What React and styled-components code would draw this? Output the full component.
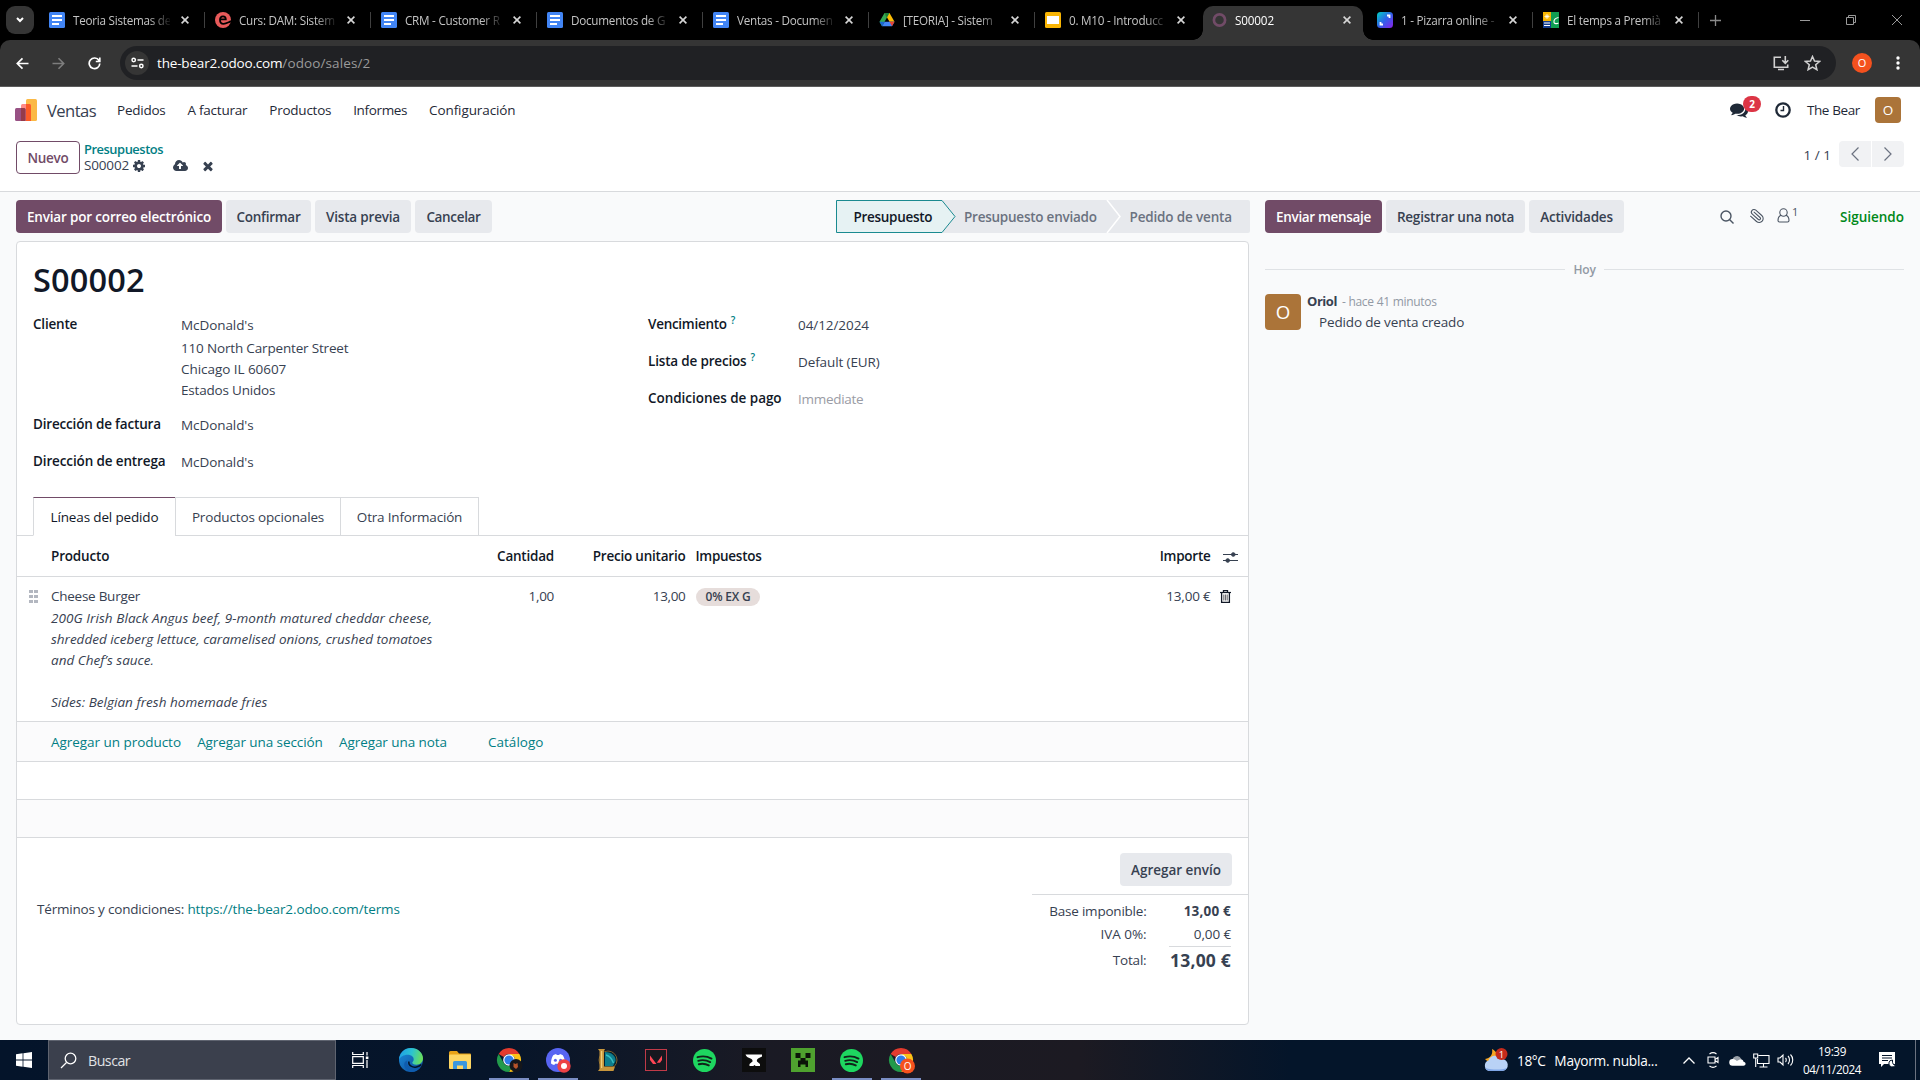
import React from "react";
import styled, { createGlobalStyle, css } from "styled-components";
import { Paperclip } from "lucide-react";

const GlobalStyle = createGlobalStyle`
  *, *::before, *::after { box-sizing: border-box; }
  body {
    margin: 0;
    overflow: hidden;
    font-family: "Open Sans", "Noto Sans", sans-serif;
    font-size: 13.5px;
    line-height: 21px;
    letter-spacing: -0.17px;
    color: #374151;
    background: #fff;
  }
  svg { display: block; flex: none; }
`;

const spacing = css`
  letter-spacing: ${(p) => (p.$ls === undefined ? "inherit" : `${p.$ls}px`)};
`;

const Text = styled.span`
  ${spacing}
  white-space: nowrap;
`;

const Screen = styled.div`
  width: 1920px;
  height: 1080px;
  display: flex;
  flex-direction: column;
  overflow: hidden;
`;

/* ---------- Browser chrome ---------- */

const TabStrip = styled.div`
  height: 40px;
  background: #000;
  display: flex;
  align-items: center;
  padding-left: 6px;
  flex: none;
`;

const TabSearch = styled.div`
  width: 28px;
  height: 28px;
  margin-right: 5px;
  border-radius: 9px;
  background: #353535;
  display: grid;
  place-items: center;
`;

const BrowserTab = styled.div`
  position: relative;
  width: 166px;
  height: 40px;
  display: flex;
  align-items: center;
  padding: 0 12px 0 10px;
  color: ${(p) => (p.$active ? "#fff" : "#c4c4c4")};
  &::after {
    content: "";
    position: absolute;
    right: 0;
    top: 12px;
    width: 1.5px;
    height: 16px;
    background: ${(p) => (p.$sep ? "#404040" : "transparent")};
  }
`;

const ActiveShape = styled.div`
  position: absolute;
  left: 2px;
  right: 4px;
  top: 6px;
  bottom: 0;
  border-radius: 10px 10px 0 0;
  background: #353535;
  &::before,
  &::after {
    content: "";
    position: absolute;
    bottom: 0;
    width: 10px;
    height: 10px;
  }
  &::before {
    left: -10px;
    background: radial-gradient(circle at 0 0, transparent 9.5px, #353535 10px);
  }
  &::after {
    right: -10px;
    background: radial-gradient(circle at 100% 0, transparent 9.5px, #353535 10px);
  }
`;

const Favicon = styled.div`
  position: relative;
  width: 16px;
  height: 16px;
  margin-right: 8px;
`;

const TabTitle = styled.div`
  position: relative;
  width: 98px;
  overflow: hidden;
  white-space: nowrap;
  font-size: 11.7px;
  letter-spacing: ${(p) => p.$ls ?? -0.25}px;
  mask-image: linear-gradient(to right, #000 76px, ${(p) => (p.$fade ? "rgba(0,0,0,.1)" : "#000")} 97px);
`;

const TabClose = styled.div`
  position: relative;
  width: 16px;
  height: 16px;
  margin-left: 7px;
  display: grid;
  place-items: center;
`;

const NewTab = styled.div`
  width: 32px;
  display: grid;
  place-items: center;
`;

const WindowControls = styled.div`
  margin-left: auto;
  display: flex;
  > div {
    width: 46px;
    display: grid;
    place-items: center;
  }
`;

const ToolbarBack = styled.div`
  background: #000;
  flex: none;
`;

const Toolbar = styled.div`
  height: 47px;
  background: #353535;
  border-radius: 10px 10px 0 0;
  border-bottom: 1px solid #5c5c5c;
  display: flex;
  align-items: center;
  padding: 0 4px 0 4px;
`;

const ToolButton = styled.div`
  width: 36px;
  height: 34px;
  display: grid;
  place-items: center;
`;

const Omnibox = styled.div`
  margin-left: 8px;
  width: 1716px;
  height: 34px;
  border-radius: 17px;
  background: #202124;
  display: flex;
  align-items: center;
  padding: 0 15px 0 5px;
  font-size: 13.5px;
`;

const SiteInfo = styled.div`
  width: 24px;
  height: 24px;
  border-radius: 50%;
  background: #353535;
  display: grid;
  place-items: center;
  margin-right: 8px;
`;

const Host = styled.span`
  color: #fff;
  font-weight: 500;
  letter-spacing: -0.17px;
`;

const Path = styled.span`
  color: #9a9a9a;
  letter-spacing: 0.11px;
`;

const OmniIcons = styled.div`
  margin: 0 0 0 auto;
  display: flex;
  gap: 14px;
`;

const Profile = styled.div`
  width: 20px;
  height: 20px;
  margin: 0 8px 0 16px;
  border-radius: 50%;
  background: #f4511e;
  color: #fff;
  font-size: 11px;
  line-height: 20px;
  text-align: center;
`;

/* ---------- Odoo ---------- */

const Navbar = styled.header`
  height: 46px;
  flex: none;
  display: flex;
  align-items: center;
  padding: 0 19px 0 15px;
  color: #1f2937;
`;

const AppName = styled.div`
  width: 55px;
  margin: 0 15px 0 10px;
  padding-top: 1px;
  font-size: 16.6px;
  letter-spacing: -0.55px;
  color: #374151;
`;

const MenuItems = styled.nav`
  display: flex;
  gap: 21.9px;
`;

const Systray = styled.div`
  margin-left: auto;
  display: flex;
  align-items: center;
`;

const Messages = styled.div`
  position: relative;
  width: 18px;
  margin-right: 27px;
`;

const Badge = styled.span`
  position: absolute;
  left: 13px;
  top: -5px;
  width: 18px;
  height: 16px;
  border-radius: 8px;
  background: #dc3545;
  color: #fff;
  font-size: 10px;
  font-weight: 700;
  line-height: 16px;
  text-align: center;
`;

const Company = styled.span`
  margin: 0 15px 0 16px;
  letter-spacing: -0.38px;
`;

const Avatar = styled.div`
  width: ${(p) => p.$size}px;
  height: ${(p) => p.$size}px;
  border-radius: 4px;
  background: #ab7439;
  color: #fff;
  font-size: ${(p) => p.$size * 0.52}px;
  line-height: ${(p) => p.$size}px;
  text-align: center;
  flex: none;
`;

const ControlPanel = styled.div`
  height: 59px;
  flex: none;
  border-bottom: 1px solid #d8dadd;
  display: flex;
  align-items: flex-start;
  padding: 8px 16px 0;
`;

const NewButton = styled.button`
  width: 64px;
  height: 33px;
  padding: 0;
  border: 1px solid #714b67;
  border-radius: 4px;
  background: #fff;
  color: #714b67;
  font: 580 13.5px "Open Sans", sans-serif;
  letter-spacing: -0.25px;
`;

const Breadcrumb = styled.div`
  margin: 0 0 0 4px;
  line-height: 17px;
`;

const CrumbLink = styled.div`
  color: #017e84;
  font-weight: 560;
  font-size: 12.9px;
  line-height: 16px;
  letter-spacing: -0.46px;
`;

const CrumbRow = styled.div`
  display: flex;
  align-items: center;
`;

const IconSlot = styled.div`
  margin-left: ${(p) => p.$gap}px;
  color: #374151;
`;

const Pager = styled.div`
  margin-left: auto;
  display: flex;
  align-items: center;
  gap: 1px;
`;

const PagerText = styled.span`
  margin-right: 7px;
  letter-spacing: 0;
  padding-top: 2px;
`;

const PagerButton = styled.div`
  width: 32px;
  height: 26px;
  background: #f1f2f4;
  border-radius: ${(p) => (p.$left ? "4px 0 0 4px" : "0 4px 4px 0")};
  display: grid;
  place-items: center;
`;

const Content = styled.main`
  flex: 1;
  min-height: 0;
  background: #f9fafb;
  display: flex;
  gap: 16px;
  padding: 8px 16px 15px;
`;

const FormColumn = styled.section`
  width: 1233px;
  display: flex;
  flex-direction: column;
`;

const StatusBar = styled.div`
  height: 33px;
  margin-bottom: 8px;
  display: flex;
  align-items: center;
  gap: 4px;
`;

const Button = styled.button`
  width: ${(p) => p.$w}px;
  height: 33px;
  padding: 1px 0 0;
  border: 0;
  border-radius: 4px;
  font: 580 13.5px "Open Sans", sans-serif;
  ${spacing}
  white-space: nowrap;
  background: ${(p) => (p.$primary ? "#714b67" : "#e7e9ed")};
  color: ${(p) => (p.$primary ? "#fff" : "#374151")};
`;

const Steps = styled.div`
  position: relative;
  margin-left: auto;
  width: 413.5px;
  height: 33px;
  padding-top: 2px;
  display: flex;
  align-items: center;
  font-weight: 580;
`;

const StepShapes = styled.svg`
  position: absolute;
  inset: 0;
`;

const Step = styled.span`
  position: relative;
  ${spacing}
  white-space: nowrap;
  width: ${(p) => p.$w}px;
  color: ${(p) => (p.$current ? "#111827" : "#6b7280")};
  &:first-of-type { margin-left: 18px; }
`;

const Sheet = styled.article`
  flex: 1;
  background: #fff;
  border: 1px solid #d8dadd;
  border-radius: 4px;
  display: flex;
  flex-direction: column;
`;

const Title = styled.h1`
  margin: 14px 0 2px 16px;
  height: 48px;
  line-height: 48px;
  font-size: 32.5px;
  font-weight: 580;
  letter-spacing: 0.15px;
  color: #111827;
`;

const FieldGroups = styled.div`
  display: grid;
  grid-template-columns: 615px 1fr;
  padding-left: 16px;
  height: 191px;
`;

const FieldGroup = styled.div`
  padding-top: ${(p) => p.$top ?? 0}px;
`;

const Field = styled.div`
  display: grid;
  grid-template-columns: ${(p) => p.$label}px 1fr;
  min-height: ${(p) => p.$h ?? 37}px;
  padding-top: ${(p) => p.$top ?? 0}px;
  align-items: start;
`;

const Label = styled.div`
  ${spacing}
  line-height: 35px;
  font-weight: 580;
  color: #111827;
  white-space: nowrap;
  sup {
    margin-left: 4px;
    font-size: 10px;
    line-height: 0;
    vertical-align: 5px;
    color: #017e84;
  }
`;

const Value = styled.div`
  padding-top: 8px;
  ${spacing}
  color: ${(p) => (p.$muted ? "#9a9ca5" : "#374151")};
`;

const Address = styled.div`
  padding-top: 2px;
  display: flex;
  flex-direction: column;
`;

const Notebook = styled.div`
  display: flex;
  height: 39px;
  padding-left: 16px;
  border-bottom: 1px solid #d8dadd;
`;

const NotebookTab = styled.div`
  width: ${(p) => p.$w}px;
  height: 39px;
  padding-top: 1px;
  display: grid;
  place-items: center;
  ${spacing}
  border: 1px solid #d8dadd;
  border-right-width: ${(p) => (p.$last ? 1 : 0)}px;
  background: #fff;
  color: ${(p) => (p.$active ? "#111827" : "#374151")};
  ${(p) => p.$active && css`
    border-top-color: #714b67;
    border-bottom-color: #fff;
  `}
`;

const TableRow = styled.div`
  display: grid;
  grid-template-columns: 34px 374px 129px 131.5px 1fr 100px 37.5px;
  height: ${(p) => p.$h}px;
  padding-top: ${(p) => p.$top}px;
  align-items: start;
  border-bottom: 1px solid #d8dadd;
  ${(p) => p.$head && css`
    font-weight: 580;
    color: #111827;
  `}
`;

const Cell = styled.div`
  ${spacing}
  text-align: ${(p) => (p.$right ? "right" : "left")};
  padding-left: ${(p) => p.$pad ?? 0}px;
  white-space: nowrap;
`;

const CellIcon = styled.div`
  padding-top: ${(p) => p.$top}px;
`;

const Description = styled.div`
  margin-top: 1px;
  font-style: italic;
  letter-spacing: 0;
`;

const Tag = styled.span`
  display: inline-block;
  margin-top: 2px;
  height: 18px;
  padding: 0 10px;
  border-radius: 9px;
  background: #e6dddb;
  font-size: 12px;
  font-weight: 580;
  line-height: 18px;
  letter-spacing: -0.2px;
`;

const AddRow = styled.div`
  height: 40px;
  display: flex;
  align-items: center;
  padding: 1px 0 0 34px;
  background: #fbfbfc;
  border-bottom: 1px solid #d8dadd;
`;

const Link = styled.a`
  ${spacing}
  color: #017e84;
  white-space: nowrap;
  margin-right: ${(p) => p.$gap ?? 0}px;
`;

const BlankRow = styled.div`
  height: 38px;
  background: ${(p) => (p.$shade ? "#fbfbfc" : "#fff")};
  border-bottom: 1px solid #d8dadd;
`;

const Footer = styled.div`
  display: flex;
`;

const Terms = styled.div`
  flex: 1;
  padding: 61px 0 0 20px;
`;

const Totals = styled.div`
  width: 216px;
  padding-top: 15px;
  display: flex;
  flex-direction: column;
  > button {
    align-self: flex-end;
    margin: 0 16px 8px 0;
  }
`;

const TotalGrid = styled.div`
  border-top: 1px solid #d8dadd;
  padding-top: 6px;
  display: grid;
  grid-template-columns: 114.5px 62.5px;
  column-gap: 22px;
  grid-template-rows: 23px 22px 28px;
  text-align: right;
`;

const Amount = styled.div`
  ${spacing}
  font-weight: ${(p) => (p.$bold ? 700 : 400)};
`;

const GrandLabel = styled.div`
  line-height: 28px;
`;

const GrandTotal = styled.div`
  border-top: 1px solid #d8dadd;
  font-weight: 700;
  font-size: 17.5px;
  line-height: 27px;
  letter-spacing: 0.2px;
  white-space: nowrap;
`;

const Chatter = styled.aside`
  flex: 1;
`;

const ChatterBar = styled.div`
  display: flex;
  align-items: center;
  gap: 4px;
  height: 33px;
`;

const ChatterIcons = styled.div`
  margin-left: auto;
  display: flex;
  align-items: center;
  color: #4b5563;
`;

const ClipIcon = styled(Paperclip)`
  transform: scaleX(-1) rotate(4deg);
  margin-top: -2px;
`;

const Followers = styled.div`
  display: flex;
  align-items: flex-start;
  margin: -2px 0 0 12px;
  width: 63px;
  font-size: 11px;
  line-height: 12px;
  gap: 2px;
  > span { margin-top: -2px; }
`;

const Following = styled.span`
  font-weight: 580;
  font-size: 13.5px;
  letter-spacing: 0;
  padding-top: 2px;
  color: #008818;
`;

const DayDivider = styled.div`
  margin-top: 26px;
  height: 21px;
  display: flex;
  align-items: center;
  gap: 8px;
  font-size: 12px;
  font-weight: 580;
  color: #9299a4;
  &::before,
  &::after {
    content: "";
    flex: 1;
    height: 1px;
    background: #dfe2e5;
  }
`;

const Message = styled.div`
  margin-top: 14px;
  display: flex;
  gap: 6px;
`;

const MessageHead = styled.div`
  margin-top: -3px;
  display: flex;
  gap: 5px;
  color: #9299a4;
  font-size: 12px;
  letter-spacing: -0.28px;
`;

const Author = styled.strong`
  font-size: 13px;
  letter-spacing: -0.45px;
  color: #374151;
`;

const MessageBody = styled.div`
  margin: 0 0 0 12px;
  letter-spacing: -0.15px;
`;

/* ---------- Taskbar ---------- */

const Taskbar = styled.footer`
  height: 40px;
  flex: none;
  display: flex;
  align-items: center;
  color: #fff;
  background: linear-gradient(90deg, #04142a 0, #06152a 500px, #1a1a24 760px, #1c1a22 1080px, #04152a 1290px, #04152a 100%);
`;

const Start = styled.div`
  width: 48px;
  display: grid;
  place-items: center;
`;

const SearchBox = styled.div`
  width: 288px;
  height: 40px;
  border: 1px solid #5f6470;
  background: #3b404d;
  display: flex;
  align-items: center;
  gap: 11px;
  padding-left: 11px;
  font-size: 14.2px;
  letter-spacing: -0.5px;
  color: #e1e2e5;
`;

const TaskIcons = styled.div`
  display: flex;
  > div:nth-child(2) { margin-left: 1px; }
`;

const TaskIcon = styled.div`
  width: 49px;
  height: 40px;
  display: grid;
  place-items: center;
  background: linear-gradient(#7a8ec4, #7a8ec4) 50% 100% / ${(p) => (p.$open ? "40px 2px" : "0 0")} no-repeat;
`;

const Tray = styled.div`
  margin-left: auto;
  display: flex;
  align-items: center;
`;

const Weather = styled.div`
  display: flex;
  align-items: center;
  font-size: 13.7px;
  width: 194px;
`;

const Temperature = styled.span`
  margin: 0 9px 0 8px;
  letter-spacing: -0.45px;
`;

const TrayIcon = styled.div`
  width: 24px;
  display: grid;
  place-items: center;
`;

const Clock = styled.div`
  width: 70px;
  text-align: center;
  font-size: 11.7px;
  line-height: 18px;
  letter-spacing: -0.38px;
`;

const ShowDesktop = styled.div`
  width: 5px;
  height: 40px;
  margin-left: 19px;
  border-left: 1px solid #6b7280;
`;

/* ---------- Icons ---------- */

const Docs = () => (
  <svg width="16" height="16" viewBox="0 0 16 16">
    <rect width="16" height="16" rx="1.5" fill="#4285f4" />
    <path d="M3 4h10M3 8h10M3 12h7" stroke="#fff" strokeWidth="2" />
  </svg>
);
const Moodle = () => (
  <svg width="16" height="16" viewBox="0 0 16 16">
    <circle cx="8" cy="8" r="8" fill="#e85a5a" />
    <path d="M5 7.300h5.800C10.800 5.500 9.800 4.300 8 4.300S5 5.600 5 8c0 2.400 1.300 3.800 3.500 3.800 2.400 0 4-1.100 7.500-2.600" fill="none" stroke="#000" strokeWidth="1.800" />
  </svg>
);
const Drive = () => (
  <svg width="16" height="16" viewBox="0 0 16 16">
    <path d="M5.500 1h5l5 8.800h-5z" fill="#fbbc04" />
    <path d="M5.500 1 .500 9.800 3 14.300 8 5.500z" fill="#34a853" />
    <path d="M5.600 9.800H15.500L13 14.300H3z" fill="#4285f4" />
    <path d="M5.500 1h5L8 5.500z" fill="#188038" />
    <path d="M15.500 9.800 13 14.300l-2.500-4.500z" fill="#ea4335" />
    <path d="M.500 9.800 3 14.300l2.600-4.500z" fill="#1967d2" />
  </svg>
);
const Slides = () => (
  <svg width="16" height="16" viewBox="0 0 16 16">
    <rect width="16" height="16" rx="1.5" fill="#f9b504" />
    <rect x="2" y="4" width="12" height="8" fill="#fff" />
  </svg>
);
const OdooRing = () => (
  <svg width="16" height="16" viewBox="0 0 16 16">
    <circle cx="8.500" cy="8" r="5.600" fill="none" stroke="#714b67" strokeWidth="2.700" />
  </svg>
);
const Board = () => (
  <svg width="16" height="16" viewBox="0 0 16 16">
    <defs>
      <linearGradient id="board" x1="0" y1="0" x2="1" y2="1">
        <stop offset="0" stopColor="#00d1c1" />
        <stop offset=".5" stopColor="#2f62e8" />
        <stop offset="1" stopColor="#8b1fe8" />
      </linearGradient>
    </defs>
    <rect width="16" height="16" rx="3.500" fill="url(#board)" />
    <path d="M10 3.500h2.500V6M6 12.500H3.500V10" fill="none" stroke="#fff" strokeWidth="1.800" />
  </svg>
);
const Meteo = () => (
  <svg width="16" height="16" viewBox="0 0 16 16">
    <rect width="8" height="9" fill="#f8b500" />
    <rect y="9" width="8" height="7" fill="#123c8c" />
    <rect x="8" width="8" height="16" fill="#109e52" />
    <path d="M4 2v5M1.500 4.500h5M2.300 2.800l3.400 3.400M5.700 2.800L2.300 6.200" stroke="#fff" strokeWidth=".8" />
    <path d="M1 11h6M1 13.500h6" stroke="#fff" strokeWidth="1.100" />
    <path d="M15.500 5.500C12.500 6 10.500 8 11 10.300c.3 1.500 3 1.900 4.500.5" fill="none" stroke="#fff" strokeWidth="1.100" />
  </svg>
);

const Cross = () => (
  <svg width="8" height="8" viewBox="0 0 8 8" stroke="#d6d6d6" strokeWidth="1.600">
    <path d="M.600.600l6.800 6.800M7.400.600.600 7.400" />
  </svg>
);

const Stroke = ({ w = 16, h = w, vb = `0 0 ${w} ${h}`, d, sw = 1.5, c = "currentColor", children }) => (
  <svg width={w} height={h} viewBox={vb} fill="none" stroke={c} strokeWidth={sw}>
    <path d={d} />
    {children}
  </svg>
);

const SalesLogo = () => (
  <svg width="22" height="22" viewBox="0 0 22 22">
    <rect x="11" y="0" width="11" height="22" rx="1.500" fill="#fbb945" />
    <rect x="6" y="5" width="10" height="17" rx="1.500" fill="#ff8a87" />
    <path d="M11 5h3.500A1.500 1.500 0 0 1 16 6.500V22h-5z" fill="#fc5b28" />
    <rect x="0" y="9" width="10.500" height="13" rx="1.500" fill="#985184" />
    <path d="M6 9h3a1.500 1.500 0 0 1 1.500 1.500V22H6z" fill="#953b4b" />
  </svg>
);

const Solid = ({ w, h = w, vb, d }) => (
  <svg width={w} height={h} viewBox={vb} fill="currentColor">
    <path d={d} />
  </svg>
);
const Gear = () => (
  <Solid w={14} vb="0 0 1792 1792" d="M1152 896q0-106-75-181t-181-75-181 75-75 181 75 181 181 75 181-75 75-181zm512-109v222q0 12-8 23t-20 13l-185 28q-19 54-39 91 35 50 107 138 10 12 10 25t-9 23q-27 37-99 108t-94 71q-12 0-26-9l-138-108q-44 23-91 38-16 136-29 186-7 28-36 28h-222q-14 0-24.500-8.500t-11.500-21.500l-28-184q-49-16-90-37l-141 107q-10 9-25 9-14 0-25-11-126-114-165-168-7-10-7-23 0-12 8-23 15-21 51-66.500t54-70.500q-27-50-41-99l-183-27q-13-2-21-12.500t-8-23.500v-222q0-12 8-23t19-13l186-28q14-46 39-92-40-57-107-138-10-12-10-24 0-10 9-23 26-36 98.500-107.500t94.500-71.500q13 0 26 10l138 107q44-23 91-38 16-136 29-186 7-28 36-28h222q14 0 24.500 8.500t11.500 21.500l28 184q49 16 90 37l142-107q9-9 24-9 13 0 25 10 129 119 165 170 7 8 7 22 0 12-8 23-15 21-51 66.500t-54 70.500q26 50 41 98l183 28q13 2 21 12.500t8 23.500z" />
);
const CloudUp = () => (
  <Solid w={15} h={14} vb="-64 0 1920 1792" d="M1216 864q0-14-9-23l-352-352q-9-9-23-9t-23 9l-351 351q-10 12-10 24 0 14 9 23t23 9h224v352q0 13 9.500 22.500t22.500 9.500h192q13 0 22.500-9.500t9.500-22.500v-352h224q13 0 22.500-9.500t9.500-22.500zm640 288q0 159-112.500 271.500t-271.500 112.500h-1088q-185 0-316.500-131.500t-131.500-316.500q0-130 70-240t188-165q-2-30-2-43 0-212 150-362t362-150q156 0 285.500 87t188.500 231q71-62 166-62 106 0 181 75t75 181q0 76-41 138 130 31 213.500 135.500t83.500 238.500z" />
);
const Times = () => (
  <Solid w={14} vb="0 0 1792 1792" d="M1490 1322q0 40-28 68l-136 136q-28 28-68 28t-68-28l-294-294-294 294q-28 28-68 28t-68-28l-136-136q-28-28-28-68t28-68l294-294-294-294q-28-28-28-68t28-68l136-136q28-28 68-28t68 28l294 294 294-294q28-28 68-28t68 28l136 136q28 28 28 68t-28 68l-294 294 294 294q28 28 28 68z" />
);
const Comments = () => (
  <Solid w={18} vb="0 0 1792 1792" d="M1408 768q0 139-94 257t-256.500 186.500-353.500 68.500q-86 0-176-16-124 88-278 128-36 9-86 16h-3q-11 0-20.500-8t-11.500-21q-1-3-1-6.500t.500-6.500 2-6l2.500-5 3.500-5.500 4-5 4.500-5 4-4.500q5-6 23-25t26-29.500 22.500-29 25-38.500 20.500-44q-124-72-195-177t-71-224q0-139 94-257t256.500-186.500 353.500-68.500 353.500 68.500 256.500 186.500 94 257zm384 256q0 120-71 224.500t-195 176.500q10 24 20.500 44t25 38.500 22.500 29 26 29.500 23 25q1 1 4 4.500t4.500 5 4 5 3.500 5.500l2.500 5 2 6 .500 6.500-1 6.500q-3 14-13 22t-22 7q-50-7-86-16-154-40-278-128-90 16-176 16-271 0-472-132 58 4 88 4 161 0 309-45t264-129q125-92 192-212t67-254q0-77-23-152 129 71 204 178t75 230z" />
);
const ClockIcon = () => (
  <svg width="16" height="16" viewBox="0 0 16 16" fill="none" stroke="#1f2937">
    <circle cx="8" cy="8" r="6.700" strokeWidth="2.300" />
    <path d="M8.500 4v4.500H5.500" strokeWidth="1.400" />
  </svg>
);
const Trash = () => (
  <svg width="11" height="13" viewBox="0 0 11 13" fill="none" stroke="#111827">
    <path d="M0 2.500h11" strokeWidth="1.200" />
    <path d="M3.500 2.200V.700h4v1.500M1.600 3v9.300h7.800V3" strokeWidth="1.300" />
    <path d="M3.800 4.500v6M5.500 4.500v6M7.200 4.500v6" stroke="#6b6b70" strokeWidth="1.100" />
  </svg>
);
const Sliders = () => (
  <svg width="15" height="13" viewBox="0 0 15 13" stroke="#374151" fill="#374151">
    <path d="M0 3.500h15M0 9.500h15" strokeWidth="1.100" />
    <circle cx="10.300" cy="3.500" r="1.800" />
    <circle cx="4.700" cy="9.500" r="1.800" />
  </svg>
);
const Handle = () => (
  <svg width="9" height="13" viewBox="0 0 9 13" fill="#b3b7c0">
    {[0, 5, 10].map((y) => [0, 5].map((x) => <rect key={`${x}${y}`} x={x} y={y} width="4" height="3" />))}
  </svg>
);

const Windows = () => (
  <svg width="16" height="16" viewBox="0 0 16 16" fill="#fff">
    <path d="M0 2.200 6.600 1.300v6.300H0zM7.400 1.200 16 0v7.600H7.400zM0 8.400h6.600v6.300L0 13.800zM7.400 8.400H16V16l-8.600-1.200z" />
  </svg>
);
const TaskView = () => (
  <svg width="17" height="16" viewBox="0 0 17 16" fill="none" stroke="#fff" strokeWidth="1.200">
    <path d="M.700 0v2.500h10.600V0M.700 16v-2.500h10.600V16M.700 4.700h10.600v6.600H.700zM15 0v3.500M15 8v8" />
    <rect x="13.800" y="4.500" width="2.600" height="2.600" fill="#fff" stroke="none" />
  </svg>
);
const Edge = () => (
  <svg width="24" height="24" viewBox="0 0 24 24">
    <defs>
      <linearGradient id="edgeTop" x1="0" y1=".3" x2="1" y2=".5">
        <stop offset="0" stopColor="#1f9fe6" />
        <stop offset=".5" stopColor="#2bc3d2" />
        <stop offset="1" stopColor="#6be057" />
      </linearGradient>
      <linearGradient id="edgeLow" x1="0" y1="0" x2="1" y2="1">
        <stop offset="0" stopColor="#1b8ddb" />
        <stop offset="1" stopColor="#0c4a98" />
      </linearGradient>
    </defs>
    <circle cx="12" cy="12" r="12" fill="url(#edgeLow)" />
    <path d="M0 11.500C.500 4.800 5.600 0 12 0c7 0 12 5 12 10.300 0 4-3 6.400-6.500 6.400-3.200 0-4.300-1.200-4.300-1.900 0-.8 1.500-1.200 1.500-3.500 0-2.300-2.300-4.500-6-4.500C4.500 6.800 1.300 9 0 11.500z" fill="url(#edgeTop)" />
    <path d="M8.300 12.500c-1 5 3.200 8.500 8 8.500 2 0 4-.6 5.300-1.700C19.500 22.300 16 24 12.500 24 8 23.500 5.200 20 5.200 16.500c0-2 1.200-3.400 3.100-4z" fill="#0f5cae" />
    <path d="M9.800 13.500c-.5 4.300 4 6.500 7.700 5.500 2-.4 3.800-1.300 4.800-2.400" fill="none" stroke="#04152a" strokeWidth="1.500" />
  </svg>
);
const Folder = () => (
  <svg width="22" height="19" viewBox="0 0 22 19">
    <path d="M0 1.500A1.500 1.500 0 0 1 1.500 0H8l2 2.500h11A1 1 0 0 1 22 3.500V9H0z" fill="#e8a317" />
    <rect y="3.500" width="22" height="14.500" rx="1" fill="#fdd663" />
    <path d="M4 18v-6.500a1.500 1.500 0 0 1 1.500-1.500h11a1.500 1.500 0 0 1 1.500 1.500V18h-4v-3.500H8V18z" fill="#3a97dd" />
  </svg>
);
const Chrome = ({ children }) => (
  <svg width="32" height="28" viewBox="-4 0 32 28">
    <path d="M12 2a12 12 0 0 1 10.400 6H12a6 6 0 0 0-5.200 3L1.600 8A12 12 0 0 1 12 2z" fill="#e33b2e" />
    <path d="M22.400 8A12 12 0 0 1 12 26l5.200-9A6 6 0 0 0 17.200 11L12 8z" fill="#fbc116" />
    <path d="M12 26A12 12 0 0 1 1.600 8l5.200 9A6 6 0 0 0 17.200 17z" fill="#229a4b" />
    <circle cx="12" cy="14" r="5.800" fill="#fff" />
    <circle cx="12" cy="14" r="4.600" fill="#2f7de9" />
    {children}
  </svg>
);
const Discord = () => (
  <svg width="32" height="28" viewBox="-4 0 32 28">
    <circle cx="12" cy="14" r="12" fill="#5865f2" />
    <path d="M5 17.500c0-3.500.8-6 2.200-8.300 1-.6 2-1 3-1.200l.5 1h2.600l.5-1c1 .2 2 .6 3 1.200 1.400 2.300 2.200 4.800 2.200 8.300-1 .9-2.200 1.400-3.300 1.600l-.8-1.300H9.100l-.8 1.300C7.200 18.900 6 18.400 5 17.500z" fill="#fff" />
    <circle cx="9.400" cy="14.300" r="1.500" fill="#5865f2" />
    <circle cx="14.600" cy="14.300" r="1.500" fill="#5865f2" />
    <circle cx="18" cy="20" r="6.700" fill="#ed4245" />
    <circle cx="18" cy="20" r="3" fill="#fff" />
  </svg>
);
const League = () => (
  <svg width="24" height="24" viewBox="0 0 24 24">
    <circle cx="13" cy="12" r="9" fill="#08202c" stroke="#7a5e2b" strokeWidth="1" />
    <path d="M10 4c6.500 0 11 4 10.500 9L18 18h-8z" fill="#0e7d8c" />
    <path d="M11 7c4 1 6 4 7.500 8" stroke="#36c0c4" strokeWidth="1.400" fill="none" />
    <path d="M3 1h7l-1 2v15.500H20L18.500 23H3l1.500-2V3z" fill="#c8963c" />
    <path d="M6 3h1.200v17H6z" fill="#f0cf7c" />
  </svg>
);
const Valorant = () => (
  <svg width="22" height="22" viewBox="0 0 22 22">
    <rect x=".5" y=".5" width="21" height="21" fill="#17171f" stroke="#c03a48" />
    <path d="M5 6.500l6.500 8.500H8L5 11zM17 6.500V11l-2 2.700h-3.200z" fill="#ff4655" />
  </svg>
);
const Spotify = () => (
  <svg width="23" height="23" viewBox="0 0 23 23">
    <circle cx="11.500" cy="11.500" r="11.500" fill="#1ed760" />
    <path d="M4.500 8.200c4.600-1.300 9.800-.9 14 1.400M5.200 11.800c4-1.100 8.300-.7 12 1.300M5.800 15.200c3.500-.8 6.800-.5 10 1.200" fill="none" stroke="#10231a" strokeWidth="1.900" strokeLinecap="round" />
  </svg>
);
const Anvil = () => (
  <svg width="24" height="24" viewBox="0 0 24 24">
    <rect width="24" height="24" fill="#0d0d0d" />
    <path d="M3.500 6.500H20v2l-3.500 1.700c-1.500.8-2 2-1.500 3.300l3 2.500v2h-4.300l-1.200-1-1.200 1H7.500v-2l3-2.500c.3-1.500-.5-2.500-2-3C6 9.800 4 8.500 3.500 6.500z" fill="#fff" />
  </svg>
);
const Creeper = () => (
  <svg width="24" height="24" viewBox="0 0 24 24">
    <rect width="24" height="24" fill="#4fa22f" />
    <path d="M4.500 5H9.500v5h-5zM14.500 5h5v5h-5zM9.500 10h5v2.500H17V19h-2.500v-2.500h-5V19H7v-6.500h2.500z" fill="#0b1408" />
  </svg>
);
const MoonCloud = () => (
  <svg width="26" height="26" viewBox="0 0 26 26">
    <path d="M9 2c1 5-1 9-7 10 3 4 10 4 12 0 1-5-1-8-5-10z" fill="#f5a623" />
    <path d="M6 24a5.500 5.500 0 0 1-.5-10.500A7 7 0 0 1 18 12a6 6 0 0 1 1.500 12z" fill="#b9d2f6" />
    <path d="M6 24h13.500a5.500 5.500 0 0 0 4.500-3c-6 2-14 2-22 0a5 5 0 0 0 4 3z" fill="#7fa6e6" />
    <circle cx="18.500" cy="7" r="6" fill="#c42b1c" />
    <text x="18.500" y="10.500" fontSize="9.500" fill="#fff" textAnchor="middle">1</text>
  </svg>
);

const TABS = [
  { icon: <Docs />, title: "Teoria Sistemas de", sep: true, fade: true },
  { icon: <Moodle />, title: "Curs: DAM: Sistem", sep: true, fade: true },
  { icon: <Docs />, title: "CRM - Customer R", sep: true, fade: true },
  { icon: <Docs />, title: "Documentos de G", sep: true, fade: true },
  { icon: <Docs />, title: "Ventas - Documen", sep: true, fade: true },
  { icon: <Drive />, title: "[TEORIA] - Sistem", sep: true, fade: true },
  { icon: <Slides />, title: "0. M10 - Introducc", fade: true },
  { icon: <OdooRing />, title: "S00002", active: true, ls: -0.15 },
  { icon: <Board />, title: "1 - Pizarra online -", sep: true, fade: true },
  { icon: <Meteo />, title: "El temps a Premià", sep: true, fade: true },
];

function BrowserChrome() {
  return (
    <>
      <TabStrip>
        <TabSearch><Stroke w={8} h={6} d="M1 1l3 3 3-3" sw={2} c="#fff" /></TabSearch>
        {TABS.map((t) => (
          <BrowserTab key={t.title} $sep={t.sep} $active={t.active}>
            {t.active && <ActiveShape />}
            <Favicon>{t.icon}</Favicon>
            <TabTitle $fade={t.fade} $ls={t.ls}>{t.title}</TabTitle>
            <TabClose><Cross /></TabClose>
          </BrowserTab>
        ))}
        <NewTab><Stroke w={11} d="M5.500 0v11M0 5.500h11" sw={1.3} c="#8a8a8a" /></NewTab>
        <WindowControls>
          <div><Stroke w={10} d="M0 5.500h10" sw={1} c="#9a9a9a" /></div>
          <div><Stroke w={10} d="M.5 2.500h7v7h-7zM2.500 2.500v-2h7v7h-2" sw={1} c="#9a9a9a" /></div>
          <div><Stroke w={10} d="M0 0l10 10M10 0L0 10" sw={1} c="#9a9a9a" /></div>
        </WindowControls>
      </TabStrip>
      <ToolbarBack>
        <Toolbar>
          <ToolButton><Stroke w={13} d="M12.500 6.500H1.500M6.500 1.300L1.300 6.500l5.200 5.200" sw={1.7} c="#fff" /></ToolButton>
          <ToolButton><Stroke w={13} d="M.5 6.500h11M6.500 1.300l5.200 5.200-5.200 5.200" sw={1.6} c="#7d7d7d" /></ToolButton>
          <ToolButton><Stroke w={13} d="M11 3.500A5.300 5.300 0 1 0 11.800 6.500M11.800.500v4h-4" sw={1.7} c="#fff" /></ToolButton>
          <Omnibox>
            <SiteInfo>
              <Stroke w={13} h={12} d="M6.500 3h6M.5 9h6" sw={1.5} c="#fff">
                <circle cx="2.700" cy="3" r="1.700" />
                <circle cx="10.300" cy="9" r="1.700" />
              </Stroke>
            </SiteInfo>
            <Host>the-bear2.odoo.com</Host>
            <Path>/odoo/sales/2</Path>
            <OmniIcons>
              <Stroke w={18} h={16} d="M9 2.200H2.300v10h13.400V9.500M6 14.500h6M13.300 1v7M10.300 5.300l3 3 3-3" sw={1.6} c="#d0d0d0" />
              <Stroke w={17} h={16} d="M8.500 1.500l2 4.600 5 .4-3.800 3.300 1.200 4.900-4.400-2.600-4.400 2.600 1.200-4.900L1.500 6.500l5-.4z" sw={1.5} c="#d0d0d0" />
            </OmniIcons>
          </Omnibox>
          <Profile>O</Profile>
          <ToolButton>
            <svg width="4" height="14" viewBox="0 0 4 14" fill="#fff">
              <circle cx="2" cy="2" r="1.700" /><circle cx="2" cy="7" r="1.700" /><circle cx="2" cy="12" r="1.700" />
            </svg>
          </ToolButton>
        </Toolbar>
      </ToolbarBack>
    </>
  );
}

function OdooHeader() {
  return (
    <>
      <Navbar>
        <SalesLogo />
        <AppName>Ventas</AppName>
        <MenuItems>
          <Text $ls={-0.24}>Pedidos</Text>
          <Text $ls={-0.22}>A facturar</Text>
          <Text $ls={-0.24}>Productos</Text>
          <Text $ls={-0.34}>Informes</Text>
          <Text $ls={-0.1}>Configuración</Text>
        </MenuItems>
        <Systray>
          <Messages><Comments /><Badge>2</Badge></Messages>
          <ClockIcon />
          <Company>The Bear</Company>
          <Avatar $size={26}>O</Avatar>
        </Systray>
      </Navbar>
      <ControlPanel>
        <NewButton>Nuevo</NewButton>
        <Breadcrumb>
          <CrumbLink>Presupuestos</CrumbLink>
          <CrumbRow>
            <Text $ls={-0.17}>S00002</Text>
            <IconSlot $gap={3}><Gear /></IconSlot>
            <IconSlot $gap={27}><CloudUp /></IconSlot>
            <IconSlot $gap={13}><Times /></IconSlot>
          </CrumbRow>
        </Breadcrumb>
        <Pager>
          <PagerText>1 / 1</PagerText>
          <PagerButton $left><Stroke w={8} h={14} d="M7.500.500L1 7l6.500 6.500" sw={1.2} c="#6b7280" /></PagerButton>
          <PagerButton><Stroke w={8} h={14} d="M.500.500L7 7 .500 13.500" sw={1.2} c="#6b7280" /></PagerButton>
        </Pager>
      </ControlPanel>
    </>
  );
}

function OrderForm() {
  return (
    <FormColumn>
      <StatusBar>
        <Button $primary $w={206} $ls={-0.17}>Enviar por correo electrónico</Button>
        <Button $w={85} $ls={-0.27}>Confirmar</Button>
        <Button $w={96} $ls={-0.2}>Vista previa</Button>
        <Button $w={77} $ls={-0.33}>Cancelar</Button>
        <Steps>
          <StepShapes width="414" height="33" viewBox="0 0 414 33">
            <path d="M100 0h312a2 2 0 0 1 2 2v29a2 2 0 0 1-2 2H100z" fill="#e7e9ed" />
            <path d="M.5.500H106L119 16.500 106 32.500H.500z" fill="#e6f2f3" stroke="#1a8a90" />
            <path d="M271 0l13 16.500L271 33" fill="none" stroke="#fff" strokeWidth="1.500" />
          </StepShapes>
          <Step $current $w={110.5} $ls={-0.29}>Presupuesto</Step>
          <Step $w={165.5} $ls={-0.24}>Presupuesto enviado</Step>
          <Step $ls={-0.16}>Pedido de venta</Step>
        </Steps>
      </StatusBar>
      <Sheet>
        <Title>S00002</Title>
        <FieldGroups>
          <FieldGroup>
            <Field $label={148} $h={101} $top={1}>
              <Label $ls={-0.2}>Cliente</Label>
              <Value $ls={-0.08}>
                McDonald's
                <Address>
                  <Text $ls={-0.17}>110 North Carpenter Street</Text>
                  <Text $ls={-0.05}>Chicago IL 60607</Text>
                  <Text $ls={-0.19}>Estados Unidos</Text>
                </Address>
              </Value>
            </Field>
            <Field $label={148}><Label $ls={-0.18}>Dirección de factura</Label><Value $ls={-0.08}>McDonald's</Value></Field>
            <Field $label={148}><Label $ls={-0.13}>Dirección de entrega</Label><Value $ls={-0.08}>McDonald's</Value></Field>
          </FieldGroup>
          <FieldGroup $top={1}>
            <Field $label={150}><Label $ls={-0.28}>Vencimiento<sup>?</sup></Label><Value $ls={-0.07}>04/12/2024</Value></Field>
            <Field $label={150}><Label $ls={-0.18}>Lista de precios<sup>?</sup></Label><Value $ls={-0.11}>Default (EUR)</Value></Field>
            <Field $label={150}><Label $ls={-0.04}>Condiciones de pago</Label><Value $muted $ls={-0.29}>Immediate</Value></Field>
          </FieldGroup>
        </FieldGroups>
        <Notebook>
          <NotebookTab $active $w={142} $ls={-0.15}>Líneas del pedido</NotebookTab>
          <NotebookTab $w={165} $ls={-0.15}>Productos opcionales</NotebookTab>
          <NotebookTab $last $w={139} $ls={-0.19}>Otra Información</NotebookTab>
        </Notebook>
        <TableRow $head $h={41} $top={10}>
          <Cell />
          <Cell $ls={-0.17}>Producto</Cell>
          <Cell $right $ls={-0.22}>Cantidad</Cell>
          <Cell $right $ls={-0.22}>Precio unitario</Cell>
          <Cell $pad={10} $ls={-0.28}>Impuestos</Cell>
          <Cell $right $ls={-0.25}>Importe</Cell>
          <IconSlot $gap={12}><CellIcon $top={4.5}><Sliders /></CellIcon></IconSlot>
        </TableRow>
        <TableRow $h={145} $top={9}>
          <Cell $pad={12}><CellIcon $top={4}><Handle /></CellIcon></Cell>
          <Cell $ls={-0.26}>
            Cheese Burger
            <Description>
              <Text $ls={0.07}>200G Irish Black Angus beef, 9-month matured cheddar cheese,</Text><br />
              <Text $ls={-0.01}>shredded iceberg lettuce, caramelised onions, crushed tomatoes</Text><br />
              <Text $ls={0.03}>and Chef’s sauce.</Text><br />
              <br />
              <Text $ls={0.03}>Sides: Belgian fresh homemade fries</Text>
            </Description>
          </Cell>
          <Cell $right $ls={-0.3}>1,00</Cell>
          <Cell $right $ls={-0.33}>13,00</Cell>
          <Cell $pad={10}><Tag>0% EX G</Tag></Cell>
          <Cell $right $ls={-0.2}>13,00 €</Cell>
          <IconSlot $gap={9.5}><CellIcon $top={3.5}><Trash /></CellIcon></IconSlot>
        </TableRow>
        <AddRow>
          <Link $gap={16.2} $ls={-0.04}>Agregar un producto</Link>
          <Link $gap={16.2} $ls={-0.08}>Agregar una sección</Link>
          <Link $gap={41} $ls={-0.07}>Agregar una nota</Link>
          <Link $ls={0.03}>Catálogo</Link>
        </AddRow>
        <BlankRow />
        <BlankRow $shade />
        <Footer>
          <Terms>
            <Text $ls={-0.19}>Términos y condiciones: </Text>
            <Link $ls={-0.12}>https://the-bear2.odoo.com/terms</Link>
          </Terms>
          <Totals>
            <Button $w={112} $ls={-0.03}>Agregar envío</Button>
            <TotalGrid>
              <Amount $ls={-0.22}>Base imponible:</Amount>
              <Amount $bold $ls={0.2}>13,00 €</Amount>
              <Amount $ls={-0.05}>IVA 0%:</Amount>
              <Amount $ls={-0.12}>0,00 €</Amount>
              <GrandLabel>Total:</GrandLabel>
              <GrandTotal>13,00 €</GrandTotal>
            </TotalGrid>
          </Totals>
        </Footer>
      </Sheet>
    </FormColumn>
  );
}

function ChatterPanel() {
  return (
    <Chatter>
      <ChatterBar>
        <Button $primary $w={117} $ls={-0.32}>Enviar mensaje</Button>
        <Button $w={139} $ls={-0.21}>Registrar una nota</Button>
        <Button $w={95} $ls={-0.18}>Actividades</Button>
        <ChatterIcons>
          <Stroke w={14} d="M9.500 9.500l4 4" sw={1.4}><circle cx="6" cy="6" r="5" /></Stroke>
          <IconSlot $gap={15}><ClipIcon size={16} strokeWidth={1.6} color="#4b5563" /></IconSlot>
          <Followers>
            <Stroke w={13} h={15} d="M4 7.300C2 8 1 9.500 1 12.500c0 .8.500 1.500 1.500 1.500h8c1 0 1.500-.7 1.500-1.500C12 9.500 11 8 9 7.300" sw={1.1}>
              <circle cx="6.500" cy="4.500" r="3.700" />
            </Stroke>
            <span>1</span>
          </Followers>
          <Following>Siguiendo</Following>
        </ChatterIcons>
      </ChatterBar>
      <DayDivider>Hoy</DayDivider>
      <Message>
        <Avatar $size={36}>O</Avatar>
        <div>
          <MessageHead><Author>Oriol</Author><span>- hace 41 minutos</span></MessageHead>
          <MessageBody>Pedido de venta creado</MessageBody>
        </div>
      </Message>
    </Chatter>
  );
}

function WindowsTaskbar() {
  return (
    <Taskbar>
      <Start><Windows /></Start>
      <SearchBox>
        <Stroke w={17} d="M6.500 10.500L1 16" sw={1.3} c="#fff"><circle cx="10.500" cy="6.500" r="5.300" /></Stroke>
        Buscar
      </SearchBox>
      <TaskIcons>
        <TaskIcon><TaskView /></TaskIcon>
        <TaskIcon><Edge /></TaskIcon>
        <TaskIcon><Folder /></TaskIcon>
        <TaskIcon $open>
          <Chrome>
            <circle cx="19" cy="19.500" r="6.500" fill="#15171c" />
            <path d="M16.500 17l2 1 2-1 .5 4-2 2-2.500-2z" fill="#b5532a" />
          </Chrome>
        </TaskIcon>
        <TaskIcon $open><Discord /></TaskIcon>
        <TaskIcon><League /></TaskIcon>
        <TaskIcon><Valorant /></TaskIcon>
        <TaskIcon><Spotify /></TaskIcon>
        <TaskIcon><Anvil /></TaskIcon>
        <TaskIcon><Creeper /></TaskIcon>
        <TaskIcon $open><Spotify /></TaskIcon>
        <TaskIcon $open>
          <Chrome>
            <circle cx="18.500" cy="20" r="7.500" fill="#f4511e" />
            <text x="18.500" y="23.800" fontSize="10" fill="#fff" textAnchor="middle">O</text>
          </Chrome>
        </TaskIcon>
      </TaskIcons>
      <Tray>
        <Weather>
          <MoonCloud />
          <Temperature>18°C</Temperature>
          <Text $ls={-0.27}>Mayorm. nubla...</Text>
        </Weather>
        <TrayIcon><Stroke w={12} h={7} d="M.500 6.500L6 1l5.500 5.500" sw={1.3} c="#fff" /></TrayIcon>
        <TrayIcon><Stroke w={12} h={16} d="M2.500 2C4.500.500 7.500.500 9.500 2M2.500 14c2 1.500 5 1.500 7 0M1 5h7v6H1zM8 7.500L11 5.500v5L8 8.500" sw={1.1} c="#fff" /></TrayIcon>
        <TrayIcon>
          <svg width="17" height="11" viewBox="0 0 17 11">
            <path d="M3.500 6A4.500 4.500 0 0 1 12 3.500L14 7z" fill="#9aa0a8" />
            <path d="M3.500 10.800a3.400 3.400 0 0 1 .3-6.800c2 0 3 1 4 2l3-1.500c3-.5 3.500 1 3.700 2.300 2.500.3 3 3.500 0 4z" fill="#fff" />
          </svg>
        </TrayIcon>
        <TrayIcon><Stroke w={17} h={15} d="M5.500 2.500H16v8H4.500V6M10.500 10.500V14M6.500 14h8M.700 1h4v4h-4zM2.700 5v9" sw={1.1} c="#fff" /></TrayIcon>
        <TrayIcon><Stroke w={17} h={14} d="M1 5h2l3-3v10L3 9H1zM8.500 5c1 1 1 3 0 4M11 3c2 2 2 6 0 8M13.500 1.500c3 3 3 8 0 11" sw={1.1} c="#fff" /></TrayIcon>
        <Clock>19:39<br />04/11/2024</Clock>
        <IconSlot $gap={12}>
          <svg width="17" height="16" viewBox="0 0 17 16">
            <path d="M0 0h16v12H5l-3 3v-3H0z" fill="#fff" />
            <path d="M3 3.500h10M3 6h10M3 8.500h6" stroke="#04152a" strokeWidth="1.100" />
            <path d="M13.500 8a3.500 3.500 0 1 0 3 5c-2 .3-3.500-1.500-3-5z" fill="#fff" stroke="#04152a" />
          </svg>
        </IconSlot>
        <ShowDesktop />
      </Tray>
    </Taskbar>
  );
}

export default function App() {
  return (
    <Screen>
      <GlobalStyle />
      <BrowserChrome />
      <OdooHeader />
      <Content>
        <OrderForm />
        <ChatterPanel />
      </Content>
      <WindowsTaskbar />
    </Screen>
  );
}
